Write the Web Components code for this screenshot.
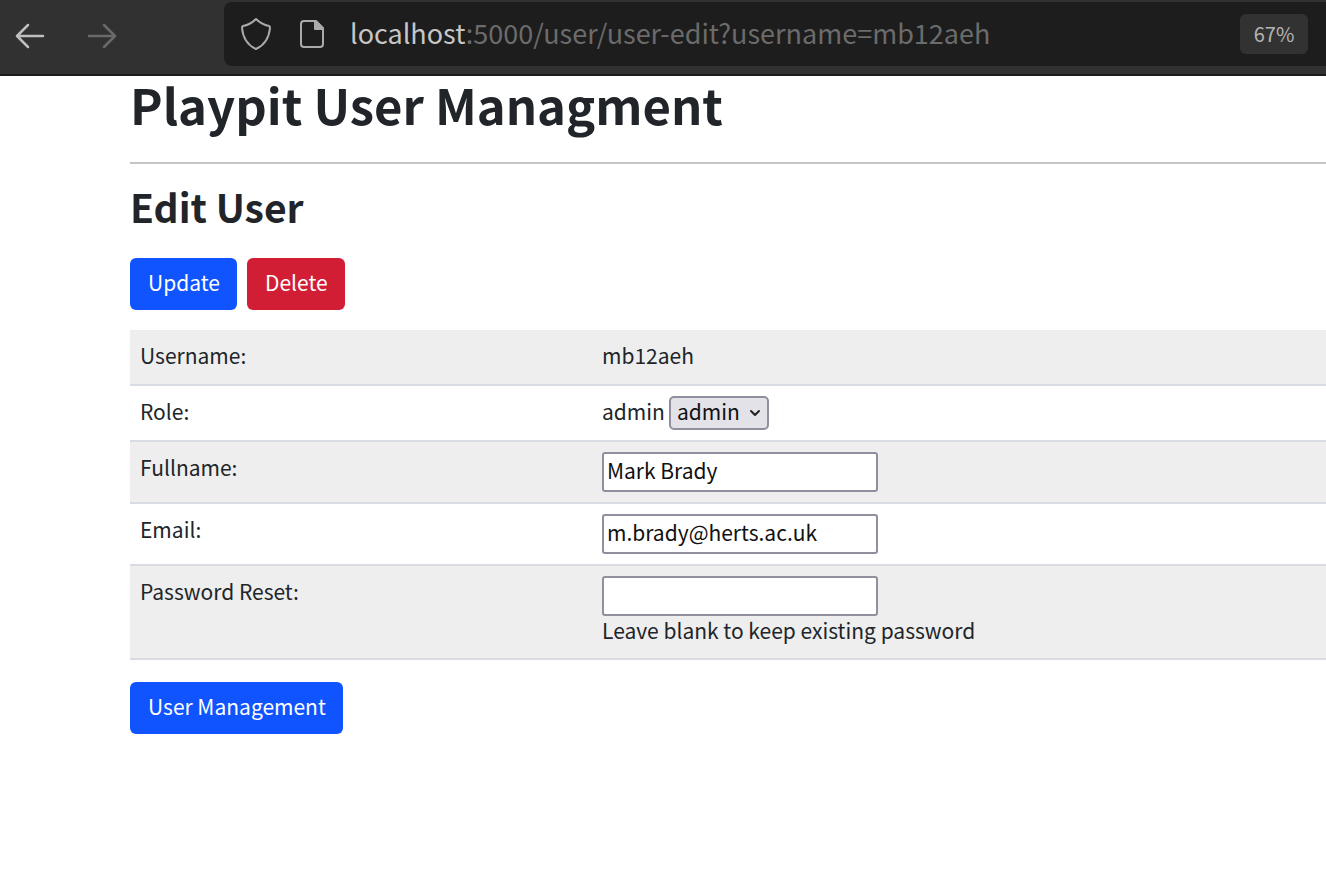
<!DOCTYPE html>
<html lang="en">
<head>
<meta charset="utf-8">
<title>Playpit User Managment</title>
<style>
body { margin: 0; background: #fff; color: #212529; font: 21px/30px "Noto Sans CJK SC", "Noto Sans", sans-serif; }
</style>
</head>
<body>
<browser-toolbar></browser-toolbar>
<user-page>
  <h1 slot="title">Playpit User Managment</h1>
  <h2 slot="subtitle">Edit User</h2>
  <action-button slot="actions">Update</action-button>
  <action-button slot="actions" variant="danger">Delete</action-button>
  <user-form></user-form>
  <action-button slot="footer">User Management</action-button>
</user-page>

<script>
class ShadowElement extends HTMLElement {
  constructor() {
    super();
    const template = document.createElement('template');
    template.innerHTML = this.constructor.markup;
    this.attachShadow({ mode: 'open' }).append(template.content.cloneNode(true));
  }
}

class BrowserToolbar extends ShadowElement {
  static markup = `
    <style>
      :host { display: flex; box-sizing: border-box; height: 76px; padding-top: 2px; background: #313131; border-bottom: 2px solid #1b1b1b; }
      nav { display: flex; flex: 0 0 224px; height: 66px; align-items: center; gap: 40px; padding-left: 14px; box-sizing: border-box; }
      button { display: block; padding: 0; border: 0; background: none; color: #bfbfbf; width: 32px; height: 32px; }
      button:disabled { color: #6a6a6a; }
      svg { display: block; fill: none; stroke: currentColor; stroke-width: 2; stroke-linecap: round; stroke-linejoin: round; }
      .bar { display: flex; flex: 1; min-width: 0; box-sizing: border-box; height: 64px; align-items: center; background: #1d1d1d; border-radius: 8px 0 0 8px; color: #aaa; padding: 0 18px 0 16px; gap: 24px; }
      .url { flex: 1; min-width: 0; white-space: nowrap; overflow: hidden; font-size: 27px; line-height: 38px; padding-bottom: 2px; color: #6b6b6b; }
      .url b { font-weight: 400; color: #c6c6c6; }
      .zoom { width: 68px; height: 40px; border-radius: 6px; background: #323232; color: #b4b4b4; font: 20px/40px "Noto Sans CJK SC", sans-serif; }
    </style>
    <nav aria-label="History">
      <button aria-label="Back"><svg width="32" height="32" viewBox="0 0 32 32"><path d="M29 17H3M14 6L3 17l11 11" stroke-width="2.500"/></svg></button>
      <button aria-label="Forward" disabled><svg width="32" height="32" viewBox="0 0 32 32"><path d="M3 17h26M18 6l11 11-11 11" stroke-width="2.500"/></svg></button>
    </nav>
    <div class="bar">
      <svg width="32" height="34" viewBox="0 0 32 34"><path d="M16 2C20 6 24 8 29 9Q30 9.500 30 11C29 21 25 28 16 32C7 28 3 21 2 11Q2 9.500 3 9C8 8 12 6 16 2Z"/></svg>
      <svg width="30" height="32" viewBox="0 0 30 32"><path d="M8 3h12l7 7v16q0 3-3 3H8q-3 0-3-3V6q0-3 3-3Z"/><path d="M19 3v8h8z" fill="currentColor"/></svg>
      <div class="url"><b>localhost</b>:5000/user/user-edit?username=mb12aeh</div>
      <button class="zoom">67%</button>
    </div>`;
}

class ActionButton extends ShadowElement {
  static markup = `
    <style>
      :host { display: inline-block; }
      button { display: block; height: 52px; padding: 0 17px 4px 18px; border: 0; border-radius: 6px; background: #0f54ff; color: #fff; font: inherit; line-height: 48px; }
      :host([variant="danger"]) button { background: #d21e35; }
    </style>
    <button type="button"><slot></slot></button>`;
}

class UserPage extends ShadowElement {
  static markup = `
    <style>
      :host { display: block; padding-left: 130px; }
      ::slotted(h1) { margin: 0; font-size: 49px; line-height: 56px; font-weight: 700; }
      ::slotted(h2) { margin: 0; font-size: 39px; line-height: 44px; font-weight: 700; }
      hr { margin: 30px 0 20px; border: 0; height: 2px; background: #c4c5c6; }
      .actions { display: flex; gap: 10px; margin: 30px 0 20px; }
      .footer { margin-top: 22px; }
    </style>
    <slot name="title"></slot>
    <hr>
    <slot name="subtitle"></slot>
    <div class="actions"><slot name="actions"></slot></div>
    <slot></slot>
    <div class="footer"><slot name="footer"></slot></div>`;
}

class UserForm extends ShadowElement {
  static markup = `
    <style>
      :host { display: block; }
      table { width: 100%; border-collapse: separate; border-spacing: 0; }
      tr { height: 56px; }
      th, td { padding: 10px; border-bottom: 2px solid #d9dce2; text-align: left; vertical-align: top; font-weight: 400; }
      th { width: 442px; }
      tr:nth-child(odd) { background: #eee; }
      input { display: block; box-sizing: border-box; width: 276px; height: 40px; padding: 0 3px 4px; border: 2px solid #8f8f9d; border-radius: 3px; background: #fff; color: #111; font: inherit; }
      .role { display: flex; gap: 4px; }
      .select { display: grid; align-items: center; }
      .select > * { grid-area: 1 / 1; }
      select { appearance: none; width: 100px; height: 34px; padding: 0 6px 4px; border: 2px solid #8f8f9d; border-radius: 5px; background: #e4e2e9; color: #111; font: inherit; line-height: 26px; }
      svg { justify-self: end; margin-right: 7px; pointer-events: none; fill: none; stroke: #222; stroke-width: 2; stroke-linecap: round; stroke-linejoin: round; }
      .hint { display: block; line-height: 28px; padding-bottom: 4px; }
    </style>
    <table>
      <tr><th scope="row">Username:</th><td>mb12aeh</td></tr>
      <tr><th scope="row"><label for="role">Role:</label></th><td><div class="role">admin
        <span class="select"><select id="role"><option>admin</option></select><svg width="14" height="10" viewBox="0 0 14 10"><path d="M3 3l4 4 4-4"/></svg></span></div></td></tr>
      <tr><th scope="row"><label for="fullname">Fullname:</label></th><td><input id="fullname" value="Mark Brady"></td></tr>
      <tr><th scope="row"><label for="email">Email:</label></th><td><input id="email" type="email" value="m.brady@herts.ac.uk"></td></tr>
      <tr><th scope="row"><label for="password">Password Reset:</label></th><td><input id="password" type="password" aria-describedby="hint"><span class="hint" id="hint">Leave blank to keep existing password</span></td></tr>
    </table>`;
}

customElements.define('browser-toolbar', BrowserToolbar);
customElements.define('action-button', ActionButton);
customElements.define('user-page', UserPage);
customElements.define('user-form', UserForm);
</script>
</body>
</html>
